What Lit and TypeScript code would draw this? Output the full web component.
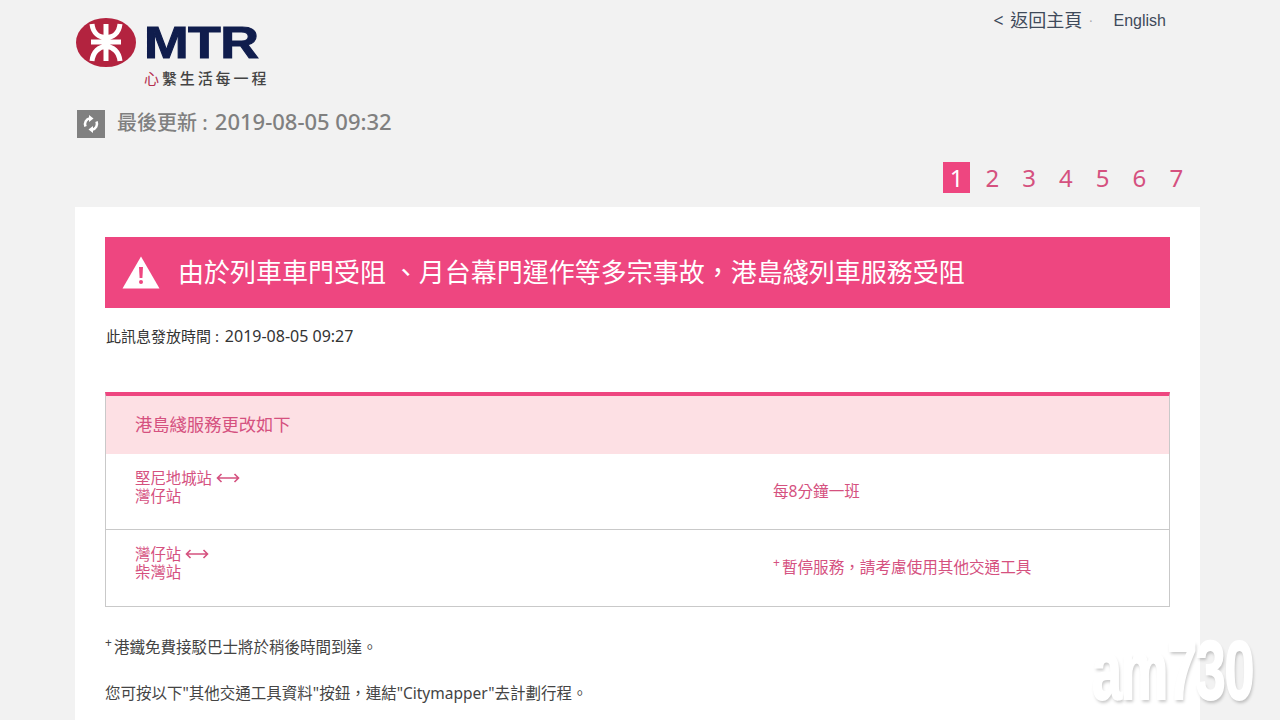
import { LitElement, html, css, svg } from "lit";
import { customElement } from "lit/decorators.js";

const arrow = html`<svg class="arrow" width="24" height="10" viewBox="0 0 24 10" fill="none" stroke="currentColor" stroke-width="1.6">
  ${svg`<path d="M1.5 5H22.5M5.5 1L1.5 5L5.5 9M18.5 1L22.5 5L18.5 9"/>`}
</svg>`;

@customElement("app-root")
export class AppRoot extends LitElement {
  static styles = css`
    :host {
      display: block;
      height: 720px;
      overflow: hidden;
      position: relative;
      background: #f2f2f2;
      font-family: "Noto Sans", "Noto Sans CJK TC", sans-serif;
      color: #444;
    }

    .top {
      display: flex;
      justify-content: space-between;
      padding: 0 114px 0 76px;
      height: 96px;
    }

    .logo {
      display: grid;
      grid-template-columns: 60px 140px;
      column-gap: 8px;
      padding-top: 18px;
      align-content: start;
    }
    .wordmark {
      font-family: "Liberation Sans", sans-serif;
      font-weight: 700;
      font-size: 44px;
      line-height: 50px;
      letter-spacing: -0.5px;
      color: #101d4d;
      -webkit-text-stroke: 1px #101d4d;
      transform: scaleX(1.22);
      transform-origin: left;
    }
    .tagline {
      grid-column: 2;
      font-size: 15px;
      font-weight: 500;
      line-height: 20px;
      letter-spacing: 2.9px;
      color: #444;
      white-space: nowrap;
    }
    .tagline span {
      color: #b5304f;
      font-weight: 400;
    }

    .nav {
      display: flex;
      padding-top: 9px;
      font-size: 16px;
      line-height: 22px;
      color: #3f4a5a;
    }
    .nav .back {
      font-size: 18px;
      word-spacing: 2px;
    }
    .nav .sep {
      margin: 0 21px 0 7px;
      color: #aaa;
      font-size: 12px;
      line-height: 26px;
    }
    .nav .en {
      font-family: "Liberation Sans", sans-serif;
      padding-top: 1px;
    }

    .updated {
      display: flex;
      align-items: center;
      gap: 12px;
      padding: 13px 0 0 77px;
      height: 29px;
      font-size: 20px;
      font-weight: 500;
      color: #808080;
    }
    .updated .icon {
      display: flex;
      width: 28px;
      height: 28px;
      background: #808080;
      align-items: center;
      justify-content: center;
    }
    .updated .text {
      padding-bottom: 6px;
    }
    .updated .date {
      font-size: 22px;
      margin-left: 2px;
    }

    .pager {
      display: flex;
      padding: 24px 0 0 943px;
      height: 31px;
      gap: 9.8px;
      font-size: 24px;
      line-height: 31px;
      color: #d5517f;
    }
    .pager span {
      width: 27px;
      text-align: center;
      text-indent: -2px;
    }
    .pager .on {
      background: #ee4680;
      color: #fff;
      text-indent: 0;
    }

    .card {
      margin: 14px 80px 0 75px;
      padding: 30px 30px 0;
      background: #fff;
      height: 490px;
      font-size: 15px;
    }

    .alert {
      display: flex;
      align-items: center;
      gap: 18px;
      height: 71px;
      padding-left: 17px;
      background: #ee4680;
      color: #fff;
      font-size: 26px;
      white-space: nowrap;
    }
    .alert .msg {
      padding-bottom: 3px;
    }

    .issued {
      margin: 18px 0 0 1px;
      line-height: 20px;
      font-size: 15px;
      color: #333;
    }
    .issued .date {
      font-size: 16px;
      margin-left: 2px;
    }

    .table {
      margin-top: 46px;
      border: 1px solid #c9c9c9;
      border-top: 4px solid #ee4680;
      color: #d5517f;
    }
    .table .head {
      height: 58px;
      line-height: 58px;
      padding-left: 29px;
      background: #fde0e4;
      font-size: 17.3px;
    }
    .row {
      display: grid;
      grid-template-columns: 638px 1fr;
      height: 75px;
      padding-left: 29px;
      align-items: center;
      line-height: 18px;
      font-size: 15.4px;
    }
    .row + .row {
      border-top: 1px solid #c9c9c9;
      height: 76px;
    }
    .row .from {
      padding-bottom: 8px;
    }
    .row .note {
      font-size: 15.6px;
      padding-bottom: 2px;
    }
    .arrow {
      vertical-align: 1px;
    }
    sup {
      font-size: 12px;
      line-height: 0;
      margin-right: 2px;
    }

    .notes {
      margin: 30px 0 0;
      font-size: 15.5px;
      line-height: 20px;
      color: #444;
    }
    .notes p {
      margin: 0 0 26px;
    }

    .watermark {
      position: absolute;
      left: 1092px;
      top: 632px;
      font-family: "Liberation Sans", sans-serif;
      font-weight: 700;
      font-size: 84px;
      line-height: 76px;
      letter-spacing: -2px;
      color: #fff;
      -webkit-text-stroke: 2px #fff;
      text-shadow: 2px 3px 4px rgba(0, 0, 0, 0.22);
      transform: scaleX(0.64);
      transform-origin: left;
      white-space: nowrap;
    }
  `;

  render() {
    return html`
      <div class="top">
        <div class="logo">
          <svg width="60" height="50" viewBox="0 0 60 50">
            <ellipse cx="30" cy="24.5" rx="30" ry="24.5" fill="#b3233f" />
            <path
              d="M16 6C17 15 23 19.5 30 19.5C37 19.5 43 15 44 6M16 43C17 34 23 28.5 30 28.5C37 28.5 43 34 44 43M30 6V43M15 24H45"
              fill="none"
              stroke="#fff"
              stroke-width="5"
            />
          </svg>
          <div class="wordmark">MTR</div>
          <div class="tagline"><span>心</span>繫生活每一程</div>
        </div>
        <div class="nav">
          <span class="back">&lt; 返回主頁</span>
          <span class="sep">·</span>
          <span class="en">English</span>
        </div>
      </div>

      <div class="updated">
        <span class="icon">
          <svg width="20" height="20" viewBox="0 0 20 20" fill="none" stroke="#fff" stroke-width="2.6">
            <path d="M4.5 12.5A6 6 0 0 1 9 4.2" />
            <path d="M15.5 7.5A6 6 0 0 1 11 15.8" />
            <path d="M8 1V8L12.5 4.5Z" fill="#fff" stroke="none" />
            <path d="M12 19V12L7.5 15.5Z" fill="#fff" stroke="none" />
          </svg>
        </span>
        <span class="text">最後更新 : <span class="date">2019-08-05 09:32</span></span>
      </div>

      <div class="pager">
        <span class="on">1</span><span>2</span><span>3</span><span>4</span><span>5</span><span>6</span><span>7</span>
      </div>

      <div class="card">
        <div class="alert">
          <svg width="38" height="33" viewBox="0 0 38 33">
            <path d="M19 0.5L37.5 32.5H0.5Z" fill="#fff" />
            <path d="M17 11H21L20.4 22H17.6Z" fill="#ee4680" />
            <circle cx="19" cy="26" r="2" fill="#ee4680" />
          </svg>
          <span class="msg">由於列車車門受阻 、月台幕門運作等多宗事故，港島綫列車服務受阻</span>
        </div>

        <div class="issued">此訊息發放時間 : <span class="date">2019-08-05 09:27</span></div>

        <div class="table">
          <div class="head">港島綫服務更改如下</div>
          <div class="row">
            <div class="from">堅尼地城站 ${arrow}<br />灣仔站</div>
            <div class="note">每8分鐘一班</div>
          </div>
          <div class="row">
            <div class="from">灣仔站 ${arrow}<br />柴灣站</div>
            <div class="note"><sup>+</sup>暫停服務，請考慮使用其他交通工具</div>
          </div>
        </div>

        <div class="notes">
          <p><sup>+</sup>港鐵免費接駁巴士將於稍後時間到達。</p>
          <p>您可按以下"其他交通工具資料"按鈕，連結"Citymapper"去計劃行程。</p>
        </div>
      </div>

      <div class="watermark">am730</div>
    `;
  }
}
